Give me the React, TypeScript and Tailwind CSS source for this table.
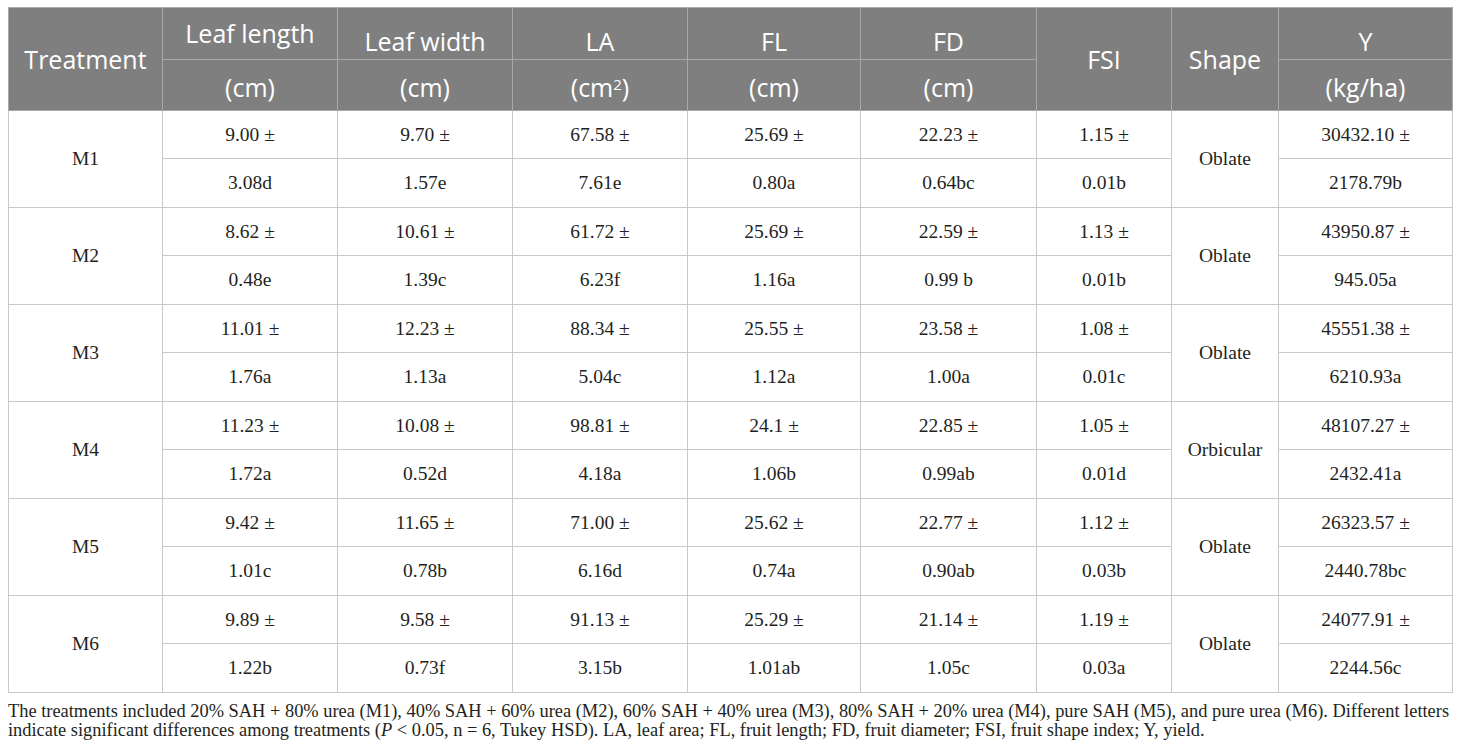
import { Fragment } from 'react'

const ROWS = [
  { id: 'M1', shape: 'Oblate', a: ['9.00 ±', '9.70 ±', '67.58 ±', '25.69 ±', '22.23 ±', '1.15 ±', '30432.10 ±'], b: ['3.08d', '1.57e', '7.61e', '0.80a', '0.64bc', '0.01b', '2178.79b'] },
  { id: 'M2', shape: 'Oblate', a: ['8.62 ±', '10.61 ±', '61.72 ±', '25.69 ±', '22.59 ±', '1.13 ±', '43950.87 ±'], b: ['0.48e', '1.39c', '6.23f', '1.16a', '0.99 b', '0.01b', '945.05a'] },
  { id: 'M3', shape: 'Oblate', a: ['11.01 ±', '12.23 ±', '88.34 ±', '25.55 ±', '23.58 ±', '1.08 ±', '45551.38 ±'], b: ['1.76a', '1.13a', '5.04c', '1.12a', '1.00a', '0.01c', '6210.93a'] },
  { id: 'M4', shape: 'Orbicular', a: ['11.23 ±', '10.08 ±', '98.81 ±', '24.1 ±', '22.85 ±', '1.05 ±', '48107.27 ±'], b: ['1.72a', '0.52d', '4.18a', '1.06b', '0.99ab', '0.01d', '2432.41a'] },
  { id: 'M5', shape: 'Oblate', a: ['9.42 ±', '11.65 ±', '71.00 ±', '25.62 ±', '22.77 ±', '1.12 ±', '26323.57 ±'], b: ['1.01c', '0.78b', '6.16d', '0.74a', '0.90ab', '0.03b', '2440.78bc'] },
  { id: 'M6', shape: 'Oblate', a: ['9.89 ±', '9.58 ±', '91.13 ±', '25.29 ±', '21.14 ±', '1.19 ±', '24077.91 ±'], b: ['1.22b', '0.73f', '3.15b', '1.01ab', '1.05c', '0.03a', '2244.56c'] },
]

const WIDTHS = [154, 175, 175, 175, 173, 176, 135, 107, 174]

const th = 'border border-[#a9a9a9] bg-[#7f7f7f] text-center font-normal text-white'
const td = 'border border-[#c9c9c9] text-center'

export default function App() {
  return (
    <div className="min-h-[753px] bg-white pl-[8px] pt-[7px] text-[#231f20]">
      <table
        className="table-fixed border-collapse border border-[#c9c9c9]"
        style={{ width: 1444 }}
      >
        <colgroup>
          {WIDTHS.map((w, i) => (
            <col key={i} style={{ width: w }} />
          ))}
        </colgroup>
        <thead className="font-['Open_Sans',sans-serif] text-[25px] leading-[30px]">
          <tr className="h-[52px]">
            <th rowSpan={2} className={th}>Treatment</th>
            <th className={`${th} pb-[2px]`}>Leaf length</th>
            <th className={`${th} pt-[14px]`}>Leaf width</th>
            <th className={`${th} pt-[14px]`}>LA</th>
            <th className={`${th} pt-[14px]`}>FL</th>
            <th className={`${th} pt-[14px]`}>FD</th>
            <th rowSpan={2} className={th}>FSI</th>
            <th rowSpan={2} className={th}>Shape</th>
            <th className={`${th} pt-[14px]`}>Y</th>
          </tr>
          <tr className="h-[51px]">
            <th className={`${th} pt-[4px]`}>(cm)</th>
            <th className={`${th} pt-[4px]`}>(cm)</th>
            <th className={`${th} pt-[4px]`}>
              (cm<sup className="text-[15px]">2</sup>)
            </th>
            <th className={`${th} pt-[4px]`}>(cm)</th>
            <th className={`${th} pt-[4px]`}>(cm)</th>
            <th className={`${th} pt-[4px]`}>(kg/ha)</th>
          </tr>
        </thead>
        <tbody className="font-['Liberation_Serif',serif] text-[19.5px]">
          {ROWS.map((r) => (
            <Fragment key={r.id}>
              <tr className="h-[48px]">
                <td rowSpan={2} className={td}>{r.id}</td>
                {r.a.slice(0, 6).map((v, i) => (
                  <td key={i} className={td}>{v}</td>
                ))}
                <td rowSpan={2} className={td}>{r.shape}</td>
                <td className={td}>{r.a[6]}</td>
              </tr>
              <tr className="h-[49px]">
                {r.b.slice(0, 6).map((v, i) => (
                  <td key={i} className={td}>{v}</td>
                ))}
                <td className={td}>{r.b[6]}</td>
              </tr>
            </Fragment>
          ))}
        </tbody>
      </table>
      <p className="mt-[9px] whitespace-nowrap font-['Liberation_Serif',serif] text-[18.4px] leading-[19px]">
        The treatments included 20% SAH + 80% urea (M1), 40% SAH + 60% urea (M2), 60% SAH + 40% urea (M3), 80% SAH + 20% urea (M4), pure SAH (M5), and pure urea (M6). Different letters
        <br />
        indicate significant differences among treatments (<i>P</i> &lt; 0.05, n = 6, Tukey HSD). LA, leaf area; FL, fruit length; FD, fruit diameter; FSI, fruit shape index; Y, yield.
      </p>
    </div>
  )
}
